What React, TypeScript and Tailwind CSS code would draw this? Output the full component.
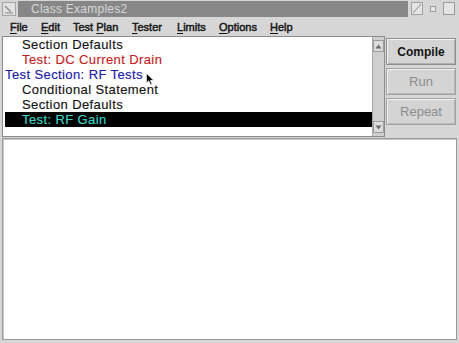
export default function App() {
  const rows: { text: string; indent: number; color: string; selected?: boolean }[] = [
    { text: "Section Defaults", indent: 1, color: "text-[#141414]" },
    { text: "Test: DC Current Drain", indent: 1, color: "text-[#c41e26]" },
    { text: "Test Section: RF Tests", indent: 0, color: "text-[#1c1ca8]" },
    { text: "Conditional Statement", indent: 1, color: "text-[#141414]" },
    { text: "Section Defaults", indent: 1, color: "text-[#141414]" },
    { text: "Test: RF Gain", indent: 1, color: "text-[#3cd2c4]", selected: true },
  ];
  const menus: { pre: string; u: string; post: string; w: string }[] = [
    { pre: "", u: "F", post: "ile", w: "w-[31px]" },
    { pre: "", u: "E", post: "dit", w: "w-[32px]" },
    { pre: "Test ", u: "P", post: "lan", w: "w-[59px]" },
    { pre: "", u: "T", post: "ester", w: "w-[45px]" },
    { pre: "", u: "L", post: "imits", w: "w-[42px]" },
    { pre: "", u: "O", post: "ptions", w: "w-[51px]" },
    { pre: "", u: "H", post: "elp", w: "w-[40px]" },
  ];
  return (
    <div className="relative w-[459px] h-[343px] bg-[#d6d6d6] font-['Liberation_Sans',Arial,sans-serif] overflow-hidden">
      {/* title bar */}
      <div className="flex h-[17px] items-stretch">
        <div className="ml-[2px] mt-[2px] w-[14px] h-[14px] bg-[#e2e2e2] border border-[#a4a4a4] flex items-center justify-center">
          <svg width="12" height="12" viewBox="0 0 12 12">
            <path d="M2 3 L8 9" stroke="#8a8a8a" strokeWidth="1.2" fill="none" />
            <path d="M2 10 L10 10" stroke="#8a8a8a" strokeWidth="1" fill="none" />
          </svg>
        </div>
        <div className="ml-[2px] mt-[1px] w-[390px] h-[16px] bg-[#878787] flex items-center pl-[13px]">
          <span className="text-[12px] text-[#d8d8d8] tracking-[0.25px] leading-none">Class Examples2</span>
        </div>
        <div className="flex items-center gap-0 ml-[3px]">
          <div className="w-[12px] h-[13px] bg-[#e4e4e4] border border-[#a0a0a0] flex items-center justify-center">
            <svg width="10" height="11" viewBox="0 0 10 11">
              <path d="M1 10 L9 1" stroke="#8a8a8a" strokeWidth="1" fill="none" />
            </svg>
          </div>
          <div className="ml-[7px] w-[6px] h-[6px] border border-[#9a9a9a] bg-[#e8e8e8]" />
          <div className="ml-[7px] w-[12px] h-[13px] border border-[#9a9a9a] bg-[#e4e4e4]" />
        </div>
      </div>
      {/* menu bar */}
      <div className="flex h-[19px] items-center pl-[10px] text-[11px] text-[#141414] [-webkit-text-stroke:0.45px_#141414]">
        {menus.map((m) => (
          <div key={m.u + m.post} className={`${m.w} leading-none pt-[1px]`}>
            {m.pre}
            <span className="underline underline-offset-[2px] decoration-1">{m.u}</span>
            {m.post}
          </div>
        ))}
      </div>
      {/* main row */}
      <div className="flex h-[102px]">
        <div className="ml-[2px] w-[383px] h-[101px] border border-[#8c8c8c] bg-white flex">
          <div className="flex-1 flex flex-col text-[13px] leading-[15px] tracking-[0.4px] [-webkit-text-stroke:0.15px_currentColor]">
            {rows.map((r, i) =>
              r.selected ? (
                <div key={i} className={`ml-[2px] h-[15px] bg-black pl-[17px] whitespace-nowrap ${r.color}`}>
                  {r.text}
                </div>
              ) : (
                <div
                  key={i}
                  className={`h-[15px] whitespace-nowrap ${r.indent ? "pl-[19px]" : "pl-[2px]"} ${r.color}`}
                >
                  {r.text}
                </div>
              )
            )}
          </div>
          <div className="w-[12px] h-full bg-[#cfcfcf] border-l border-[#a8a8a8] flex flex-col justify-between py-[3px]">
            <div className="h-[12px] w-[11px] bg-[#dcdcdc] border border-[#9c9c9c] flex items-center justify-center">
              <svg width="7" height="5" viewBox="0 0 7 5">
                <path d="M0.5 4.5 L3.5 0.5 L6.5 4.5 Z" fill="#6a6a6a" />
              </svg>
            </div>
            <div className="h-[12px] w-[11px] bg-[#dcdcdc] border border-[#9c9c9c] flex items-center justify-center">
              <svg width="7" height="5" viewBox="0 0 7 5">
                <path d="M0.5 0.5 L3.5 4.5 L6.5 0.5 Z" fill="#6a6a6a" />
              </svg>
            </div>
          </div>
        </div>
        <div className="ml-[1px] w-[70px] pt-[2px] flex flex-col gap-[3px]">
          <div className="h-[27px] bg-[#d4d4d4] border border-[#8e8e8e] shadow-[inset_1px_1px_0_#f2f2f2,inset_-1px_-1px_0_#b0b0b0] flex items-center justify-center text-[12px] font-bold text-[#141414]">
            Compile
          </div>
          <div className="h-[27px] bg-[#d4d4d4] border border-[#a2a2a2] shadow-[inset_1px_1px_0_#f2f2f2,inset_-1px_-1px_0_#b8b8b8] flex items-center justify-center text-[13px] text-[#8c8c8c]">
            Run
          </div>
          <div className="h-[27px] bg-[#d4d4d4] border border-[#a2a2a2] shadow-[inset_1px_1px_0_#f2f2f2,inset_-1px_-1px_0_#b8b8b8] flex items-center justify-center text-[13px] text-[#8c8c8c]">
            Repeat
          </div>
        </div>
      </div>
      {/* bottom text area */}
      <div className="mx-[2px] h-[202px] border border-[#9a9a9a] bg-white shadow-[inset_1px_1px_0_#c8c8c8]" />
      {/* mouse cursor */}
      <svg className="absolute left-[146px] top-[73px]" width="9" height="13" viewBox="0 0 9 13">
        <path d="M0.5 0.5 L0.5 10 L2.8 7.8 L4.6 11.8 L6 11.2 L4.3 7.3 L7.6 7.3 Z" fill="#000" stroke="#fff" strokeWidth="0.6" />
      </svg>
    </div>
  );
}
